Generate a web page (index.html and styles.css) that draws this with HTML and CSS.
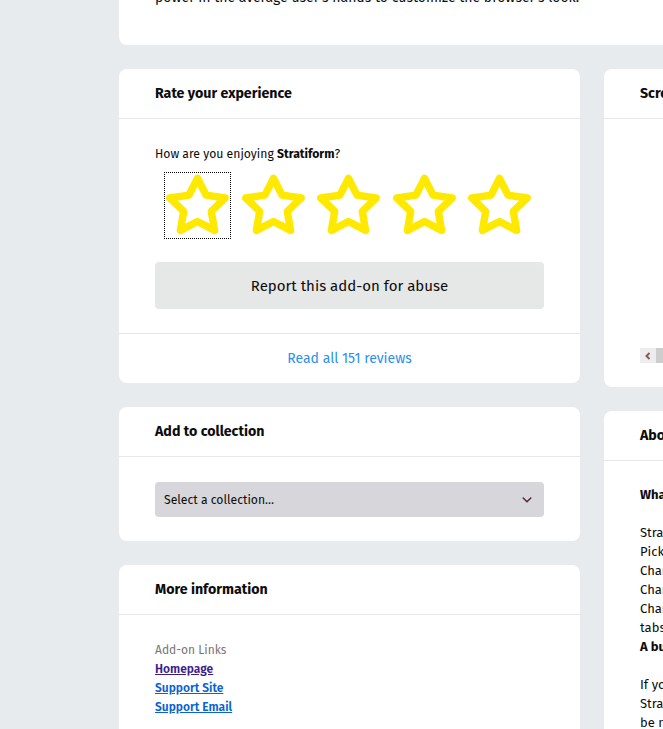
FILE: index.html
```html
<!DOCTYPE html>
<html lang="en">
<head>
<meta charset="utf-8">
<title>Stratiform</title>
<link rel="stylesheet" href="styles.css">
</head>
<body>
<div class="page">
  <section class="card card-wide top-card">
    <p class="top-text">power in the average user's hands to customize the browser's look.</p>
  </section>

  <div class="col">
    <section class="card rate-card">
      <header class="card-head">Rate your experience</header>
      <div class="card-body">
        <p class="enjoy">How are you enjoying <strong>Stratiform</strong>?</p>
        <div class="stars">
          <span class="star focused"><svg viewBox="0.6 0.6 22.8 22.8" width="63" height="63"><polygon points="12,2.2 15.09,8.26 22,9.27 17,14.14 18.18,21.02 12,17.77 5.82,21.02 7,14.14 2,9.27 8.91,8.26"/></svg></span>
          <span class="star"><svg viewBox="0.6 0.6 22.8 22.8" width="63" height="63"><polygon points="12,2.2 15.09,8.26 22,9.27 17,14.14 18.18,21.02 12,17.77 5.82,21.02 7,14.14 2,9.27 8.91,8.26"/></svg></span>
          <span class="star"><svg viewBox="0.6 0.6 22.8 22.8" width="63" height="63"><polygon points="12,2.2 15.09,8.26 22,9.27 17,14.14 18.18,21.02 12,17.77 5.82,21.02 7,14.14 2,9.27 8.91,8.26"/></svg></span>
          <span class="star"><svg viewBox="0.6 0.6 22.8 22.8" width="63" height="63"><polygon points="12,2.2 15.09,8.26 22,9.27 17,14.14 18.18,21.02 12,17.77 5.82,21.02 7,14.14 2,9.27 8.91,8.26"/></svg></span>
          <span class="star"><svg viewBox="0.6 0.6 22.8 22.8" width="63" height="63"><polygon points="12,2.2 15.09,8.26 22,9.27 17,14.14 18.18,21.02 12,17.77 5.82,21.02 7,14.14 2,9.27 8.91,8.26"/></svg></span>
        </div>
        <div class="report-btn">Report this add-on for abuse</div>
      </div>
      <footer class="card-foot"><a class="reviews-link" href="#">Read all 151 reviews</a></footer>
    </section>

    <section class="card">
      <header class="card-head">Add to collection</header>
      <div class="card-body collection-body">
        <div class="select">
          <span>Select a collection…</span>
          <svg class="chev" viewBox="0 0 10 6" width="10" height="6"><path d="M1.2 1 L5 4.8 L8.8 1"/></svg>
        </div>
      </div>
    </section>

    <section class="card">
      <header class="card-head">More information</header>
      <div class="card-body info-body">
        <div class="info-label">Add-on Links</div>
        <a class="info-link visited" href="#">Homepage</a>
        <a class="info-link" href="#">Support Site</a>
        <a class="info-link" href="#">Support Email</a>
      </div>
    </section>
  </div>

  <div class="col">
    <section class="card shots-card">
      <header class="card-head">Screenshots</header>
      <div class="shots-body">
        <div class="scrollbar">
          <span class="scroll-btn"><svg viewBox="0 0 8 8" width="8" height="8"><path d="M5.5 1 L2.5 4 L5.5 7"/></svg></span>
          <span class="scroll-thumb"></span>
        </div>
      </div>
    </section>

    <section class="card">
      <header class="card-head">About this theme</header>
      <div class="card-body about-body">
        <p class="about-p"><strong>What's new in Stratiform 2</strong></p>
        <p class="about-p">Stratiform is a theme that restyles the whole Firefox interface.<br>
        Pick your own colours for the toolbars and the tab strip.<br>
        Change the size and shape of the toolbar buttons.<br>
        Change the look of the address bar and search bar.<br>
        Change the background of the selected and unselected<br>
        tabs, with many more settings in the options page.<br>
        <strong>A built-in options page gives you full control.</strong></p>
        <p class="about-p">If you find a bug or want a new feature, please report it.<br>
        Stratiform is open source and contributions are welcome; it can<br>
        be modified freely by anyone who wants to help.</p>
      </div>
    </section>
  </div>
</div>
</body>
</html>
```

FILE: styles.css
```css
html, body {
  margin: 0;
  padding: 0;
}
body {
  background: #e8ebee;
  font-family: "Fira Sans", Roboto, "Noto Sans", sans-serif;
  color: #0c0c0d;
  overflow: hidden;
  height: 729px;
}
.page {
  display: grid;
  grid-template-columns: 461px 461px;
  column-gap: 24px;
  padding-left: 119px;
  margin-top: -40px;
  align-items: start;
}
.col {
  display: flex;
  flex-direction: column;
  gap: 24px;
}
.card {
  background: #fff;
  border-radius: 8px;
}
.card-wide {
  grid-column: 1 / 3;
  margin-bottom: 24px;
}
.top-card {
  padding: 28px 36px 38px;
}
.top-text {
  margin: 0;
  font-size: 14px;
  line-height: 19px;
}
.card-head {
  height: 49px;
  border-bottom: 1px solid #e8e8ea;
  padding: 0 36px;
  display: flex;
  align-items: center;
  font-size: 14.2px;
  font-weight: 700;
}
.card-body {
  padding: 24px 36px;
}
.collection-body {
  padding-top: 25px;
}
.enjoy {
  margin: 2px 0 0;
  font-size: 12.2px;
  line-height: 18px;
}
.stars {
  display: flex;
  gap: 10.5px;
  margin: 10px 0 0 10px;
}
.star {
  width: 65px;
  height: 65px;
  display: flex;
  align-items: center;
  justify-content: center;
  box-sizing: border-box;
}
.star.focused {
  outline: 1px dotted #000;
}
.star svg polygon {
  fill: none;
  stroke: #ffe900;
  stroke-width: 2.7;
  stroke-linejoin: round;
}
.report-btn {
  margin-top: 24px;
  height: 47px;
  background: #e6e7e7;
  border-radius: 4px;
  display: flex;
  align-items: center;
  justify-content: center;
  font-size: 15px;
}
.card-foot {
  height: 49px;
  border-top: 1px solid #e8e8ea;
  display: flex;
  align-items: center;
  justify-content: center;
}
.reviews-link {
  color: #2a91ee;
  text-decoration: none;
  font-size: 14px;
}
.select {
  height: 35px;
  background: #d7d7db;
  border-radius: 4px;
  display: flex;
  align-items: center;
  justify-content: space-between;
  padding: 0 12px 0 9px;
  font-size: 12.2px;
}
.chev path {
  fill: none;
  stroke: #5a2a45;
  stroke-width: 1.6;
  stroke-linecap: round;
  stroke-linejoin: round;
}
.info-body {
  display: flex;
  flex-direction: column;
  align-items: flex-start;
  font-size: 12px;
  line-height: 19px;
  padding-top: 26px;
}
.info-label {
  color: #7a7573;
}
.info-link {
  color: #0a63cf;
  font-weight: 600;
  text-decoration: underline;
}
.info-link.visited {
  color: #3d1d8a;
}
.shots-card {
  height: 318px;
  display: flex;
  flex-direction: column;
}
.shots-body {
  flex: 1;
  display: flex;
  align-items: flex-end;
  padding: 0 0 24px 36px;
}
.scrollbar {
  display: flex;
  height: 15px;
  width: 100%;
}
.scroll-btn {
  width: 16px;
  height: 15px;
  background: #ededf0;
  display: flex;
  align-items: center;
  justify-content: center;
}
.scroll-btn path {
  fill: none;
  stroke: #8b5a58;
  stroke-width: 2;
}
.scroll-thumb {
  flex: 1;
  background: #cdcdcd;
}
.about-body {
  padding-top: 24px;
  font-size: 13px;
  line-height: 19px;
}
.about-p {
  margin: 0 0 19px;
  white-space: nowrap;
}
```
